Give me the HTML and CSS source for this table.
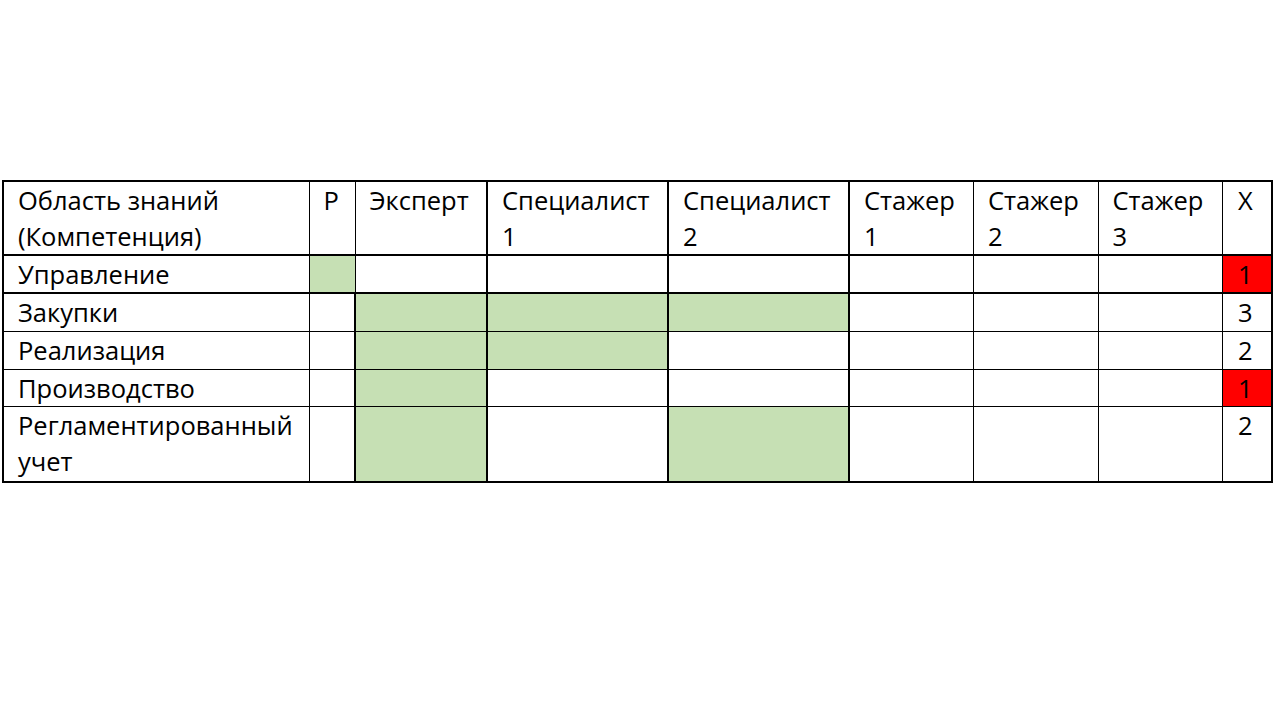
FILE: index.html
```html
<!DOCTYPE html>
<html lang="ru">
<head>
<meta charset="utf-8">
<title>Компетенции</title>
<link rel="stylesheet" href="styles.css">
</head>
<body>
<div class="page">
<table class="grid">
<colgroup>
<col class="c-area"><col class="c-p"><col class="c-exp"><col class="c-sp"><col class="c-sp"><col class="c-st"><col class="c-st"><col class="c-st"><col class="c-x">
</colgroup>
<tr class="head">
<td>Область знаний<br>(Компетенция)</td>
<td>Р</td>
<td>Эксперт</td>
<td class="thick-l">Специалист<br>1</td>
<td class="thick-l">Специалист<br>2</td>
<td class="thick-l">Стажер<br>1</td>
<td>Стажер<br>2</td>
<td>Стажер<br>3</td>
<td>Х</td>
</tr>
<tr class="row thick-top first">
<td>Управление</td>
<td class="g"></td>
<td></td>
<td class="thick-l"></td>
<td class="thick-l"></td>
<td class="thick-l"></td>
<td></td>
<td></td>
<td class="r">1</td>
</tr>
<tr class="row thick-top plus">
<td>Закупки</td>
<td></td>
<td class="g thick-l"></td>
<td class="g thick-l"></td>
<td class="g thick-l"></td>
<td class="thick-l"></td>
<td></td>
<td></td>
<td>3</td>
</tr>
<tr class="row plus">
<td>Реализация</td>
<td></td>
<td class="g thick-l"></td>
<td class="g thick-l"></td>
<td class="thick-l"></td>
<td class="thick-l"></td>
<td></td>
<td></td>
<td>2</td>
</tr>
<tr class="row short">
<td>Производство</td>
<td></td>
<td class="g thick-l"></td>
<td class="thick-l"></td>
<td class="thick-l"></td>
<td class="thick-l"></td>
<td></td>
<td></td>
<td class="r">1</td>
</tr>
<tr class="row tall">
<td>Регламентированный<br>учет</td>
<td></td>
<td class="g thick-l"></td>
<td class="thick-l"></td>
<td class="g thick-l"></td>
<td class="thick-l"></td>
<td></td>
<td></td>
<td>2</td>
</tr>
</table>
</div>
</body>
</html>
```

FILE: styles.css
```css
html, body {
  margin: 0;
  padding: 0;
  background: #ffffff;
}
.page {
  width: 1280px;
  height: 720px;
  padding: 180px 0 0 2px;
  box-sizing: border-box;
}
.grid {
  border-collapse: collapse;
  table-layout: fixed;
  width: 1270px;
  font-family: "Open Sans", "Noto Sans", sans-serif;
  font-size: 25.5px;
  line-height: 36px;
  color: #000000;
  border: 2px solid #000;
}
.c-area { width: 306px; }
.c-p { width: 46px; }
.c-exp { width: 132px; }
.c-sp { width: 181px; }
.c-st { width: 124.5px; }
.c-x { width: 49px; }
.grid td {
  border: 1.5px solid #000;
  vertical-align: top;
  padding: 0 0 0 14px;
  white-space: nowrap;
  overflow: visible;
}
.grid td.thick-l { border-left-width: 2.5px; }
.grid tr.thick-top td { border-top-width: 2.5px; }
.head td { height: 69px; }
.row td { height: 35px; }
.row.first td { height: 34px; }
.row.plus td { height: 37px; }
.row.short td { height: 35px; }
.row.tall td { height: 74px; }
.g { background: #c6e0b4; }
.r { background: #ff0000; }
.grid td:last-child { padding-left: 15px; }
```
